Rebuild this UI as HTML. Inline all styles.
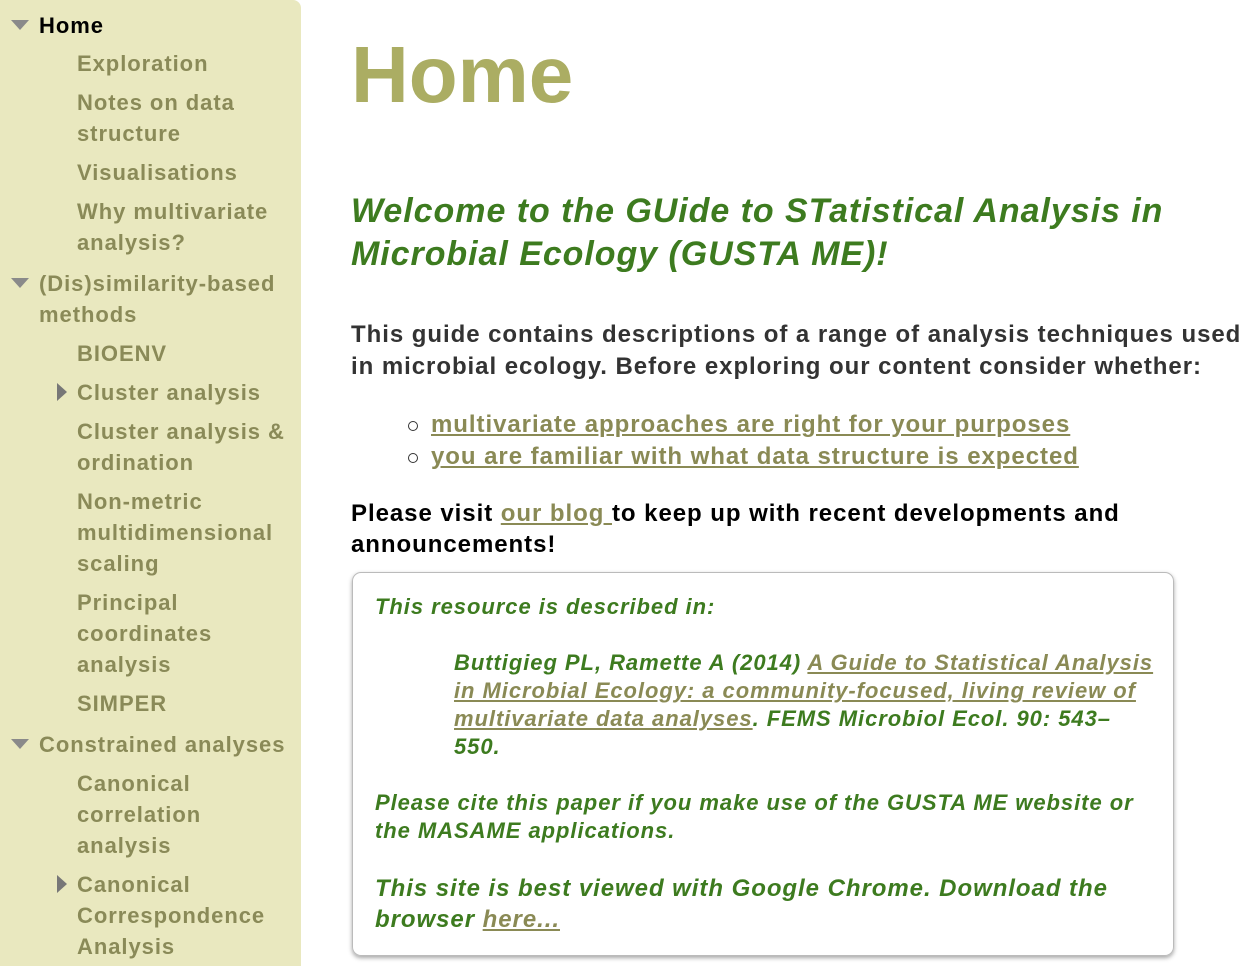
<!DOCTYPE html>
<html><head><meta charset="utf-8"><style>
*{margin:0;padding:0;box-sizing:border-box}
body{width:1260px;height:966px;overflow:hidden;background:#fff;font-family:"Liberation Sans",Arial,sans-serif;font-weight:bold;position:relative;letter-spacing:0.95px}
#side{position:absolute;left:0;top:0;width:301px;height:966px;background:#e9e8bf;border-top-right-radius:8px;color:#8a8a58;font-size:22px;line-height:31px}
.it{position:absolute;left:77px;width:215px}
.top{position:absolute;left:39px;width:250px}
.tri{position:absolute;left:11px;width:0;height:0;border-left:9px solid transparent;border-right:9px solid transparent;border-top:10px solid #8a8a8a}
.rt{position:absolute;left:57px;width:0;height:0;border-top:9px solid transparent;border-bottom:9px solid transparent;border-left:10px solid #777}
#main{position:absolute;left:351px;top:0;width:905px}
h1{position:absolute;top:30px;left:0;font-size:80px;color:#abad63;line-height:90px;letter-spacing:0}
h2{position:absolute;top:190px;left:0;font-size:34px;font-style:italic;color:#3d7b1f;line-height:43px;width:900px}
.p{position:absolute;left:0;font-size:24px;color:#333;line-height:32px;width:905px}
a{color:#8a8a55;text-decoration:underline}
.li{position:absolute;left:80px;font-size:24px;line-height:32px;white-space:nowrap}
.dot{position:absolute;left:-23px;top:12px;width:10px;height:10px;border:1.5px solid #333;border-radius:50%}
#box{position:absolute;left:352px;top:572px;width:822px;height:384px;border:1px solid #bbb;border-radius:9px;box-shadow:0 2px 4px rgba(0,0,0,.35);color:#3d7b1f;font-style:italic;font-size:22px;line-height:28px}
#box div{position:absolute;left:22px;width:780px}
</style></head><body>
<div id="side">
<div class="tri" style="top:20px"></div>
<div class="top" style="top:10px;color:#000">Home</div>
<div class="it" style="top:48px">Exploration</div>
<div class="it" style="top:87px">Notes on data structure</div>
<div class="it" style="top:157px">Visualisations</div>
<div class="it" style="top:196px">Why multivariate analysis?</div>
<div class="tri" style="top:278px"></div>
<div class="top" style="top:268px">(Dis)similarity-based methods</div>
<div class="it" style="top:338px">BIOENV</div>
<div class="rt" style="top:383px"></div>
<div class="it" style="top:377px">Cluster analysis</div>
<div class="it" style="top:416px">Cluster analysis &amp; ordination</div>
<div class="it" style="top:486px">Non-metric multidimensional scaling</div>
<div class="it" style="top:587px">Principal coordinates analysis</div>
<div class="it" style="top:688px">SIMPER</div>
<div class="tri" style="top:739px"></div>
<div class="top" style="top:729px">Constrained analyses</div>
<div class="it" style="top:768px">Canonical correlation analysis</div>
<div class="rt" style="top:875px"></div>
<div class="it" style="top:869px">Canonical Correspondence Analysis</div>
</div>
<div id="main">
<h1>Home</h1>
<h2>Welcome to the GUide to STatistical Analysis in Microbial Ecology (GUSTA ME)!</h2>
<div class="p" style="top:319px">This guide contains descriptions of a range of analysis techniques used in microbial ecology. Before exploring our content consider whether:</div>
<div class="li" style="top:409px"><span class="dot"></span><a>multivariate approaches are right for your purposes</a></div>
<div class="li" style="top:441px"><span class="dot"></span><a>you are familiar with what data structure is expected</a></div>
<div class="p" style="top:498px;color:#000;line-height:31px;width:800px">Please visit <a>our blog </a>to keep up with recent developments and announcements!</div>
</div>
<div id="box">
<div style="top:20px">This resource is described in:</div>
<div style="top:76px;left:101px;width:700px">Buttigieg PL, Ramette A (2014) <a>A Guide to Statistical Analysis in Microbial Ecology: a community-focused, living review of multivariate data analyses</a>. FEMS Microbiol Ecol. 90: 543–550.</div>
<div style="top:216px;width:770px">Please cite this paper if you make use of the GUSTA ME website or the MASAME applications.</div>
<div style="top:300px;font-size:24px;line-height:31px;width:760px">This site is best viewed with Google Chrome. Download the browser <a>here...</a></div>
</div>
</body></html>
